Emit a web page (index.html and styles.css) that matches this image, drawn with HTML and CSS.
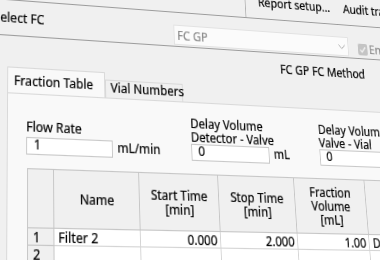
FILE: index.html
```html
<!DOCTYPE html>
<html lang="en">
<head>
    <meta charset="UTF-8">
    <title>Select FC</title>
    <link rel="stylesheet" href="styles.css">
</head>
<body>
    <div class="dialog">
        <div class="toolbar">
            <div class="tool-group">
                <div class="tool-btn">Report setup...</div>
                <div class="tool-btn">Audit trail</div>
            </div>
        </div>

        <div class="select-row">
            <div class="select-label">Select FC</div>
            <div class="combo">
                <span>FC GP</span>
                <svg width="9" height="5" viewBox="0 0 9 5"><path d="M0.5 0.5 L4.5 4.5 L8.5 0.5" fill="none" stroke="#a0a0a0" stroke-width="1"/></svg>
            </div>
            <div class="check">
                <svg width="12" height="12" viewBox="0 0 12 12"><rect x="0" y="0" width="12" height="12" rx="2" fill="#c4c4c4"/><path d="M2.8 6.2 L5 8.4 L9.3 3.6" fill="none" stroke="#f2f2f2" stroke-width="1.5"/></svg>
                <span>Enabled</span>
            </div>
        </div>

        <div class="method-row">FC GP FC Method</div>

        <div class="tabs">
            <div class="tab active">Fraction Table</div>
            <div class="tab">Vial Numbers</div>
        </div>

        <div class="tab-panel">
            <div class="fields">
                <div class="field field-flow">
                    <div class="field-label">Flow Rate</div>
                    <div class="field-row">
                        <div class="input input-wide">1</div>
                        <span class="unit">mL/min</span>
                    </div>
                </div>
                <div class="field field-delay">
                    <div class="field-label">Delay Volume<br>Detector - Valve</div>
                    <div class="field-row">
                        <div class="input">0</div>
                        <span class="unit">mL</span>
                    </div>
                </div>
                <div class="field">
                    <div class="field-label">Delay Volume<br>Valve - Vial</div>
                    <div class="field-row">
                        <div class="input">0</div>
                        <span class="unit">mL</span>
                    </div>
                </div>
            </div>

            <table class="fraction-table">
                <colgroup>
                    <col class="col-row">
                    <col class="col-name">
                    <col class="col-time">
                    <col class="col-time">
                    <col class="col-volume">
                    <col class="col-rack">
                </colgroup>
                <thead>
                    <tr>
                        <th></th>
                        <th>Name</th>
                        <th>Start Time<br>[min]</th>
                        <th>Stop Time<br>[min]</th>
                        <th>Fraction<br>Volume<br>[mL]</th>
                        <th>Destination</th>
                    </tr>
                </thead>
                <tbody>
                    <tr>
                        <td class="row-head">1</td>
                        <td>Filter 2</td>
                        <td class="num">0.000</td>
                        <td class="num">2.000</td>
                        <td class="num">1.00</td>
                        <td>DEFAULT</td>
                    </tr>
                    <tr>
                        <td class="row-head">2</td>
                        <td></td>
                        <td></td>
                        <td></td>
                        <td></td>
                        <td></td>
                    </tr>
                    <tr>
                        <td class="row-head">3</td>
                        <td></td>
                        <td></td>
                        <td></td>
                        <td></td>
                        <td></td>
                    </tr>
                </tbody>
            </table>
        </div>
    </div>
</body>
</html>
```

FILE: styles.css
```css
html, body {
    margin: 0;
    width: 380px;
    height: 260px;
    overflow: hidden;
    background: #f0f0f0;
}

/* the dialog is photographed at an angle, so the flat layout is warped onto the screen */
.dialog {
    width: 480px;
    height: 300px;
    overflow: hidden;
    background: #f0f0f0;
    color: #000;
    font-family: "Noto Sans", "DejaVu Sans", sans-serif;
    font-size: 13px;
    line-height: 13px;
    -webkit-text-stroke: 0.2px;
    transform-origin: 0 0;
    transform: matrix3d(0.94372, 0.07098, 0, 0.00023045, -0.008195, 1.040028, 0, -0.00027317, 0, 0, 1, 0, 1.896, 19.466, 0, 1) translate(-20px, -60px);
}

.toolbar {
    display: flex;
    height: 40px;
    padding-left: 296px;
    border-bottom: 1px solid #9c9c9c;
}

.tool-group {
    display: flex;
    flex: none;
    align-items: flex-end;
    padding: 0 0 10px 15px;
    border-left: 1px solid #b4b4b4;
}

.tool-btn {
    flex: none;
    width: 106px;
    white-space: nowrap;
}

.select-row {
    display: flex;
    align-items: flex-start;
    height: 33px;
    padding-left: 11px;
    border-bottom: 1px solid #9c9c9c;
}

.select-row > * {
    flex: none;
}

.select-label {
    width: 199px;
    margin-top: 10px;
}

.combo {
    display: flex;
    align-items: center;
    justify-content: space-between;
    box-sizing: border-box;
    width: 211px;
    height: 20px;
    margin-top: 12px;
    padding: 0 3px 0 3px;
    background: #fbfbfb;
    border: 1px solid #e2e2e2;
    color: #8c8c8c;
}

.check {
    display: flex;
    align-items: center;
    gap: 2px;
    margin: 17px 0 0 12px;
    color: #8c8c8c;
    white-space: nowrap;
}

.method-row {
    box-sizing: border-box;
    height: 30px;
    padding: 9px 0 0 334px;
    white-space: nowrap;
}

.tabs {
    display: flex;
    align-items: flex-end;
    height: 23px;
    padding-left: 26px;
}

.tab {
    flex: none;
    box-sizing: border-box;
    width: 87px;
    height: 17px;
    padding-left: 5px;
    border: 1px solid #d9d9d9;
    border-bottom: none;
    white-space: nowrap;
}

.tab.active {
    width: 105px;
    height: 24px;
    padding: 5px 0 0 6px;
    background: #f9f9f9;
}

.tab-panel {
    box-sizing: border-box;
    height: 172px;
    margin-left: 26px;
    padding: 13px 0 0 19px;
    background: #f9f9f9;
    border: 1px solid #d9d9d9;
    overflow: hidden;
}

.fields {
    display: flex;
    align-items: flex-end;
}

.field {
    flex: none;
}

.field-flow {
    width: 179px;
}

.field-delay {
    width: 150px;
}

.field-label {
    white-space: nowrap;
}

.field-flow .field-label {
    margin-bottom: 3px;
}

.field-row {
    display: flex;
    align-items: flex-start;
    gap: 5px;
}

.input {
    flex: none;
    box-sizing: border-box;
    width: 90px;
    height: 16px;
    padding-left: 7px;
    line-height: 11px;
    background: #fff;
    border: 1px solid #c8c8c8;
}

.input-wide {
    width: 92px;
}

.fraction-table {
    table-layout: fixed;
    width: 498px;
    margin: 12px 0 0 1px;
    border-collapse: collapse;
    border: 1px solid #8e8e8e;
}

.col-row { width: 27px; }
.col-name { width: 91px; }
.col-time { width: 88px; }
.col-volume { width: 85px; }
.col-rack { width: 119px; }

.fraction-table th {
    height: 51px;
    padding: 0;
    font-weight: normal;
    background: #f0f0f0;
    border: 1px solid #c6c6c6;
    white-space: nowrap;
}

.fraction-table td {
    height: 14px;
    padding: 0 4px;
    line-height: 14px;
    background: #fff;
    border: 1px solid #d4d4d4;
    white-space: nowrap;
    overflow: hidden;
}

.fraction-table td.row-head {
    padding-left: 5px;
    background: #f0f0f0;
    border-color: #c6c6c6;
}

.fraction-table td.num {
    text-align: right;
    padding-right: 3px;
}
```
